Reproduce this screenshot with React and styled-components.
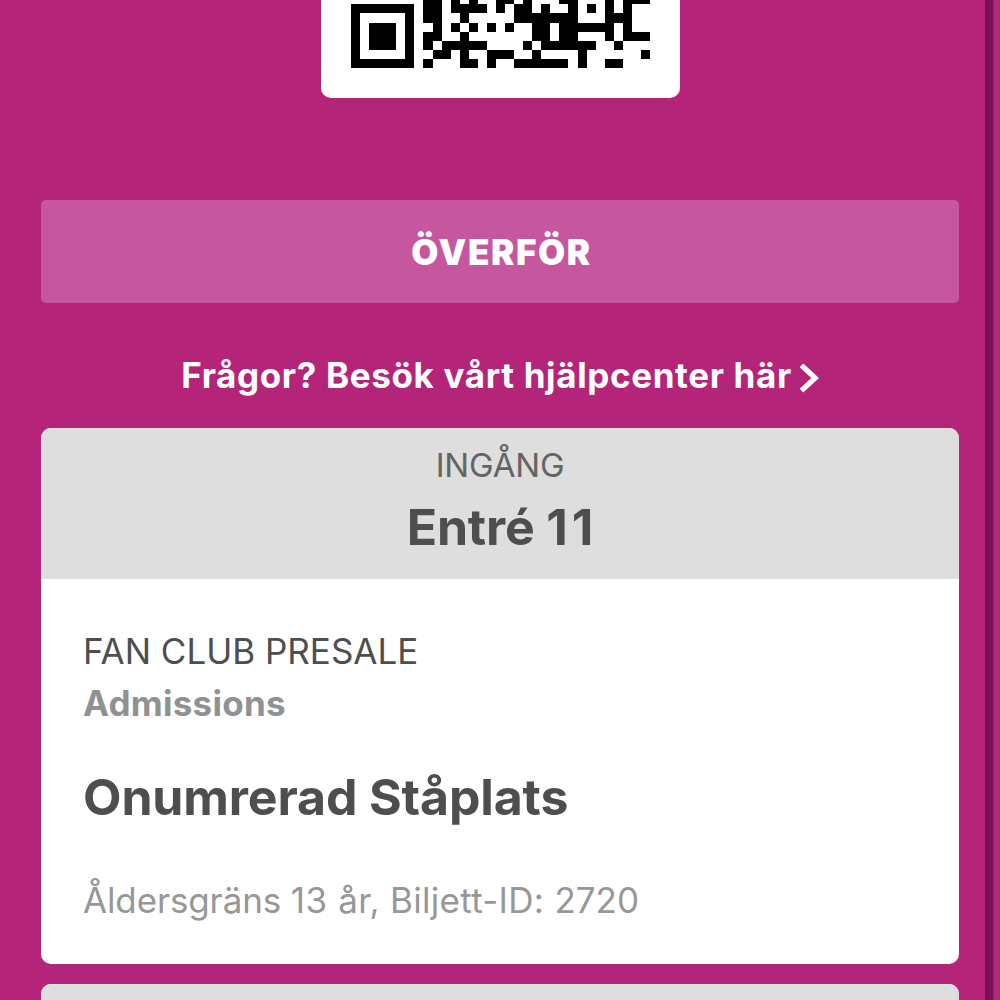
import React from "react";
import styled, { createGlobalStyle } from "styled-components";

const GlobalStyle = createGlobalStyle`
  * { box-sizing: border-box; }
  body {
    margin: 0;
    overflow: hidden;
    background: #b4257a;
    font-family: Inter, "Liberation Sans", sans-serif;
  }
`;

const Screen = styled.div`
  display: flex;
  width: 1000px;
  height: 1000px;
  overflow: hidden;
`;

const Ticket = styled.main`
  flex: 0 0 985px;
  padding: 0 26px 0 41px;
  display: flex;
  flex-direction: column;
`;

const Edge = styled.div`
  flex: 0 0 8px;
  background: #7a1355;
`;

const NextTicket = styled.div`
  flex: 1;
  background: #b1277a;
  border-left: 1px solid #9c1f6b;
`;

const CodeBox = styled.div`
  flex: none;
  align-self: center;
  width: 359px;
  height: 97.5px;
  padding-left: 30px;
  background: #fff;
  border-radius: 0 0 10px 10px;
`;

const TransferButton = styled.button`
  flex: none;
  height: 103px;
  margin: 102.5px 0 0;
  padding: 1px 0 0 3px;
  border: 0;
  border-radius: 5px;
  background: #c6569e;
  color: #fff;
  font: 900 35px/1 Inter, "Liberation Sans", sans-serif;
  letter-spacing: 1.6px;
`;

const HelpLink = styled.a`
  flex: none;
  display: flex;
  align-items: center;
  justify-content: center;
  height: 125px;
  padding: 19px 0 0 1px;
  gap: 7px;
  color: #fff;
  white-space: nowrap;
  svg { margin-top: 6px; }
`;

const Card = styled.section`
  flex: none;
  height: 535.5px;
  border-radius: 10px;
  overflow: hidden;
  background: #fff;
  & + & { margin-top: 20.5px; }
`;

const Entrance = styled.header`
  height: 151px;
  padding-top: 17px;
  background: #dedede;
  display: flex;
  flex-direction: column;
  align-items: center;
`;

const Details = styled.div`
  padding: 50px 42px 0;
  display: flex;
  flex-direction: column;
  align-items: flex-start;
`;

const Line = styled.div`
  font-size: ${(p) => p.$size}px;
  font-weight: ${(p) => p.$weight || 400};
  line-height: ${(p) => p.$height}px;
  letter-spacing: ${(p) => p.$spacing || 0}px;
  margin-top: ${(p) => p.$top || 0}px;
  color: ${(p) => p.$color || "#4e4e4e"};
  white-space: nowrap;
`;

const Tracked = styled.span`
  letter-spacing: ${(p) => p.$spacing}px;
`;

const ROWS = [
  "........##.#.#..##.#...##...#.###",
  "#######.##.####.#.##.#..#.#.#.#..",
  "#.....#.##..#.....#######...###..",
  "#.###.#..#.#.#.#.#..##.######.#..",
  "#.###.#.##..#.......##.##...#.###",
  "#.###.#.#.#####....#.######..#...",
  "#.....#..##.#..###..#....#......#",
  "#######.#...##.#..######.#..##...",
];

function QrCode() {
  const path = ROWS.map((row, y) =>
    [...row.matchAll(/#+/g)].map((m) => `M${m.index} ${y}h${m[0].length}v1h-${m[0].length}z`).join("")
  ).join("");
  return (
    <svg width="299" height="68" viewBox="0 0.514 33 7.486" preserveAspectRatio="none" shapeRendering="crispEdges" display="block">
      <path d={path} fill="#000" />
    </svg>
  );
}

export default function App() {
  return (
    <Screen>
      <GlobalStyle />
      <Ticket>
        <CodeBox><QrCode /></CodeBox>
        <TransferButton>ÖVERFÖR</TransferButton>
        <HelpLink>
          <Line as="span" $size={35} $weight={650} $height={44} $spacing={0.64} $color="#fff">Frågor? Besök vårt hjälpcenter här</Line>
          <svg width="21" height="30" viewBox="0 0 21 30" fill="none">
            <path d="M2.5 2.3L16.2 15L2.5 27.7" stroke="#fff" strokeWidth="5.2" />
          </svg>
        </HelpLink>
        <Card>
          <Entrance>
            <Line $size={33} $height={40} $spacing={-0.2} $color="#646464">INGÅNG</Line>
            <Line $size={50} $height={60} $weight={700} $top={12}>
              <Tracked $spacing={-0.2}>Entré </Tracked><Tracked $spacing={4}>1</Tracked>1
            </Line>
          </Entrance>
          <Details>
            <Line $size={35} $height={44}>FAN CLUB PRESALE</Line>
            <Line $size={35} $height={44} $weight={700} $spacing={0.24} $top={8} $color="#919191">Admissions</Line>
            <Line $size={50} $height={60} $weight={700} $spacing={-0.14} $top={42}>Onumrerad Ståplats</Line>
            <Line $size={35} $height={44} $top={51} $color="#979797">
              <Tracked $spacing={-0.14}>Åldersgräns </Tracked><Tracked $spacing={0.6}>13 </Tracked><Tracked $spacing={0.3}>år, Biljett-ID: </Tracked>2720
            </Line>
          </Details>
        </Card>
        <Card><Entrance /></Card>
      </Ticket>
      <Edge />
      <NextTicket />
    </Screen>
  );
}
